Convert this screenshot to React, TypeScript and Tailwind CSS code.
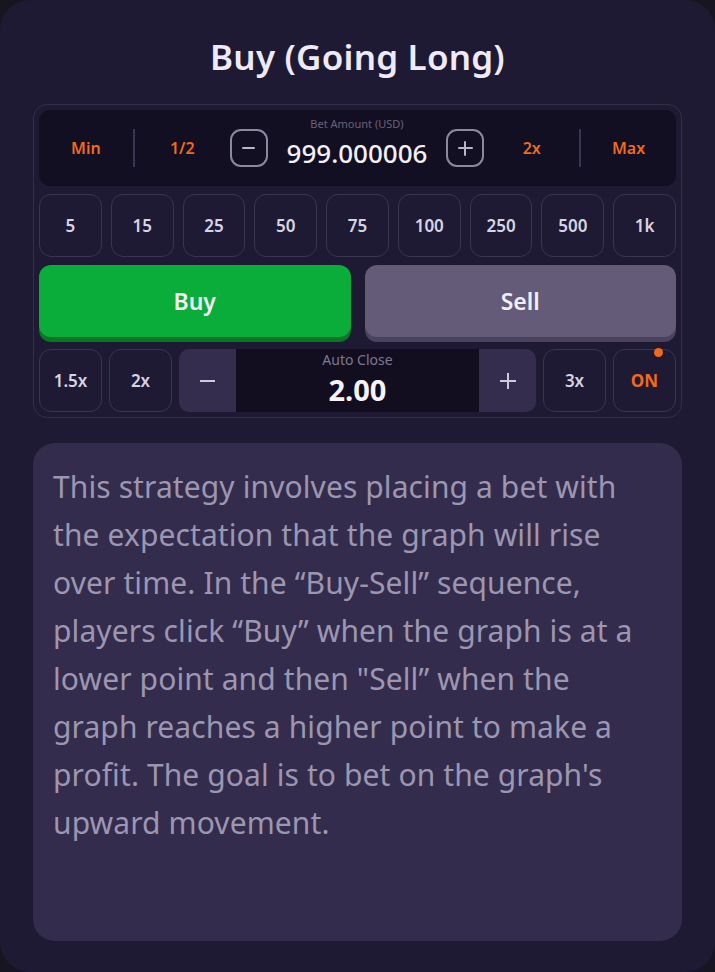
import React from 'react';

const FONT = '"Noto Sans", "Open Sans", sans-serif';

function Chip({ children, className = '' }: { children: React.ReactNode; className?: string }) {
  return (
    <div
      className={`relative flex h-[63px] items-center justify-center rounded-[12px] border border-[#3a3451] bg-[#1f1a33] text-[17px] font-semibold text-[#d7d3e2] ${className}`}
    >
      {children}
    </div>
  );
}

export default function App() {
  const chips = ['5', '15', '25', '50', '75', '100', '250', '500', '1k'];
  const lines = [
    'This strategy involves placing a bet with',
    'the expectation that the graph will rise',
    'over time. In the \u201cBuy-Sell\u201d sequence,',
    'players click \u201cBuy\u201d when the graph is at a',
    'lower point and then "Sell\u201d when the',
    'graph reaches a higher point to make a',
    "profit. The goal is to bet on the graph's",
    'upward movement.',
  ];
  return (
    <div className="h-[972px] w-[715px] bg-[#17151f]" style={{ fontFamily: FONT }}>
      <div className="flex h-[972px] w-[715px] flex-col rounded-[30px] bg-[#1f1a33] px-[33px] pt-[35px]">
        <h1 className="text-center text-[35px] font-semibold leading-[44px] tracking-[0.2px] text-[#efeaf8]">
          Buy (Going Long)
        </h1>

        <div className="mt-[25px] flex flex-col rounded-[14px] border border-[#342e4a] p-[5px]">
          {/* Bet amount */}
          <div className="flex h-[76px] items-center rounded-[11px] bg-[#130f22]">
            <div className="flex w-[94px] justify-center text-[16px] font-semibold text-[#f06a1c]">Min</div>
            <div className="h-[38px] w-[2px] bg-[#3a3450]" />
            <div className="flex w-[95px] justify-center text-[16px] font-semibold text-[#f06a1c]">1/2</div>
            <div className="flex h-[38px] w-[38px] items-center justify-center rounded-[11px] border-2 border-[#8d889e]">
              <div className="h-[2px] w-[13px] rounded bg-[#b9b4c6]" />
            </div>
            <div className="flex h-[76px] w-[179px] flex-col items-center pt-[8px]">
              <div className="text-[11px] leading-[12px] text-[#67627a]">Bet Amount (USD)</div>
              <div className="mt-[9px] text-[26px] font-medium leading-[28px] text-[#f3f0f8]">999.000006</div>
            </div>
            <div className="relative flex h-[38px] w-[38px] items-center justify-center rounded-[11px] border-2 border-[#8d889e]">
              <div className="absolute h-[2px] w-[15px] rounded bg-[#b9b4c6]" />
              <div className="absolute h-[15px] w-[2px] rounded bg-[#b9b4c6]" />
            </div>
            <div className="flex w-[95px] justify-center text-[16px] font-semibold text-[#f06a1c]">2x</div>
            <div className="h-[38px] w-[2px] bg-[#3a3450]" />
            <div className="flex w-[95px] justify-center text-[16px] font-semibold text-[#f06a1c]">Max</div>
          </div>

          {/* chips */}
          <div className="mt-[8px] grid grid-cols-9 gap-[9px]">
            {chips.map((c) => (
              <Chip key={c} className="h-[62px]">
                {c}
              </Chip>
            ))}
          </div>

          {/* Buy / Sell */}
          <div className="mt-[8px] grid grid-cols-2 gap-[14px]">
            <button className="h-[72px] rounded-[12px] bg-[#0aac3a] text-[23px] font-semibold text-[#f1eef7] shadow-[0_5px_0_#0a7524]">
              Buy
            </button>
            <button className="h-[72px] rounded-[12px] bg-[#635b78] text-[23px] font-semibold text-[#f1eef7] shadow-[0_5px_0_#4a435f]">
              Sell
            </button>
          </div>

          {/* auto close */}
          <div className="mt-[12px] flex gap-[7px]">
            <Chip className="w-[63px]">1.5x</Chip>
            <Chip className="w-[63px]">2x</Chip>
            <div className="flex h-[63px] flex-1 overflow-hidden rounded-[10px]">
              <div className="flex w-[57px] items-center justify-center bg-[#342d4d]">
                <div className="h-[2px] w-[15px] bg-[#cfcadb]" />
              </div>
              <div className="flex flex-1 flex-col items-center bg-[#120e20] pt-[3px]">
                <div className="text-[14px] leading-[16px] text-[#7d788f]">Auto Close</div>
                <div className="mt-[8px] text-[29px] font-bold leading-[28px] text-[#f6f3fa]">2.00</div>
              </div>
              <div className="relative flex w-[57px] items-center justify-center bg-[#342d4d]">
                <div className="absolute h-[2px] w-[16px] bg-[#cfcadb]" />
                <div className="absolute h-[16px] w-[2px] bg-[#cfcadb]" />
              </div>
            </div>
            <Chip className="w-[63px]">3x</Chip>
            <Chip className="w-[63px]">
              <span className="font-bold text-[#f06a1c]">ON</span>
              <span className="absolute right-[12px] top-[-2px] h-[9px] w-[9px] rounded-full bg-[#f06a1c]" />
            </Chip>
          </div>
        </div>

        {/* description */}
        <div className="mt-[25px] h-[498px] rounded-[22px] bg-[#342c4c] px-[20px] pt-[20px]">
          {lines.map((l, i) => (
            <div key={i} className="whitespace-nowrap text-[30px] leading-[48px] tracking-[0.1px] text-[#9c97b1]">
              {l}
            </div>
          ))}
        </div>
      </div>
    </div>
  );
}
